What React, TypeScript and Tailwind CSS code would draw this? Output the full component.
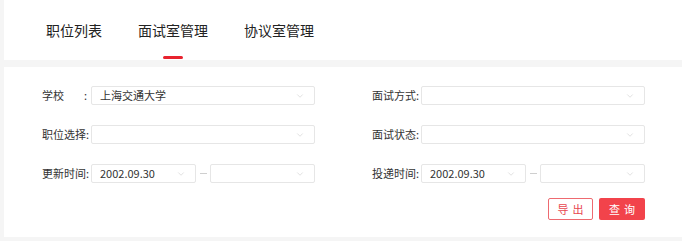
import { ChevronDown } from 'lucide-react';

const font = { fontFamily: '"Noto Sans CJK SC", "Noto Sans", sans-serif' };

function Select({ value, w = 'w-[224px]' }: { value?: string; w?: string }) {
  return (
    <div className={`${w} h-[19px] shrink-0 border border-[#e6e6e6] rounded-[2px] bg-white flex items-center justify-between pl-[8px] pr-[9px]`}>
      <span className="text-[11px] text-[#333] leading-none">{value}</span>
      <ChevronDown className="w-[10px] h-[10px] text-[#cfcfcf]" strokeWidth={1.5} />
    </div>
  );
}

function DateRange({ from }: { from?: string }) {
  return (
    <div className="flex items-center w-[224px] shrink-0">
      <Select value={from} w="w-[105px]" />
      <div className="w-[14px] flex justify-center">
        <div className="w-[7px] h-px bg-[#cfcfcf]" />
      </div>
      <Select w="w-[105px]" />
    </div>
  );
}

function Field({ label, children, colon, w }: { label: string; children: React.ReactNode; colon?: boolean; w: string }) {
  return (
    <div className={`${w} shrink-0 flex items-center`}>
      {colon ? (
        <div className="w-[49px] shrink-0 flex justify-between pr-[4px] text-[11px] text-[#333]">
          <span>{label}</span>
          <span>:</span>
        </div>
      ) : (
        <div className="w-[49px] shrink-0 text-[11px] text-[#333] whitespace-nowrap">{label}:</div>
      )}
      {children}
    </div>
  );
}

export default function App() {
  return (
    <div className="w-[682px] h-[241px] bg-[#f5f5f5] pl-[4px] overflow-hidden" style={font}>
      <div className="h-[60px] bg-white flex items-start pl-[42px] gap-[36px]">
        {['职位列表', '面试室管理', '协议室管理'].map((t, i) => (
          <div key={t} className="relative h-[60px] flex items-center">
            <span className="text-[14px] text-[#222] leading-none -mt-[1px]">{t}</span>
            {i === 1 && <div className="absolute bottom-[1px] left-1/2 -translate-x-1/2 w-[20px] h-[3px] rounded-full bg-[#e8232f]" />}
          </div>
        ))}
      </div>
      <div className="mt-[7px] h-[170px] bg-white pl-[38px] pt-[19px]">
        <div className="flex flex-col gap-[20px]">
          <div className="flex">
            <Field w="w-[330px]" label="学校" colon><Select value="上海交通大学" /></Field>
            <Field w="w-[273px]" label="面试方式"><Select /></Field>
          </div>
          <div className="flex">
            <Field w="w-[330px]" label="职位选择"><Select /></Field>
            <Field w="w-[273px]" label="面试状态"><Select /></Field>
          </div>
          <div className="flex">
            <Field w="w-[330px]" label="更新时间"><DateRange from="2002.09.30" /></Field>
            <Field w="w-[273px]" label="投递时间"><DateRange from="2002.09.30" /></Field>
          </div>
        </div>
        <div className="flex justify-end w-[603px] mt-[15px] gap-[6px]">
          <button className="w-[45px] h-[22px] border border-[#ee6a70] rounded-[2px] text-[11px] text-[#e8474f] tracking-[4px] pl-[4px] leading-none">导出</button>
          <button className="w-[46px] h-[22px] bg-[#f2434b] rounded-[2px] text-[11px] text-white tracking-[4px] pl-[4px] leading-none">查询</button>
        </div>
      </div>
    </div>
  );
}
